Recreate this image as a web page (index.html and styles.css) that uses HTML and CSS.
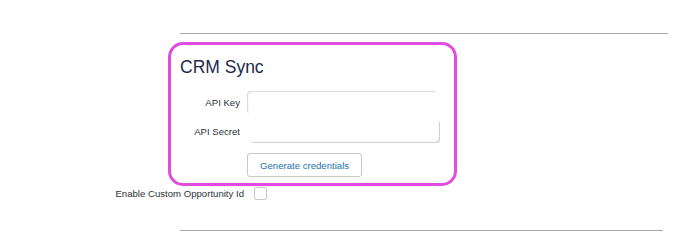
FILE: index.html
```html
<!DOCTYPE html>
<html lang="en">
<head>
    <meta charset="UTF-8">
    <meta name="viewport" content="width=device-width, initial-scale=1.0">
    <title>CRM Sync</title>
    <link rel="stylesheet" href="styles.css">
</head>
<body>
<div class="rule rule-top"></div>

<div class="card">
    <h2>CRM Sync</h2>
    <div class="fields">
        <label for="apiKey">API Key</label>
        <input type="text" id="apiKey" class="input input-key">
        <label for="apiSecret">API Secret</label>
        <input type="text" id="apiSecret" class="input input-secret">
        <span></span>
        <button type="button" class="btn">Generate credentials</button>
    </div>
</div>

<div class="check-row">
    <label for="customOpp">Enable Custom Opportunity Id</label>
    <input type="checkbox" id="customOpp" class="check">
</div>

<div class="rule rule-bottom"></div>
</body>
</html>
```

FILE: styles.css
```css
body {
    margin: 0;
    padding: 0;
    background-color: #fff;
    font-family: "Liberation Sans", Arial, sans-serif;
    color: #2c3338;
}
.rule {
    margin-left: 180px;
    border-top: 1px solid #a7a7a7;
}
.rule-top {
    width: 488px;
    margin-top: 33px;
}
.rule-bottom {
    width: 483px;
    margin-top: 30px;
}
.card {
    box-sizing: border-box;
    width: 289px;
    height: 144px;
    margin: 8px 0 0 168px;
    padding: 11px 9px 0 9px;
    border: 3px solid #e04ce0;
    border-radius: 15px;
}
.card h2 {
    margin: 0;
    font-size: 17.5px;
    line-height: 23px;
    font-weight: 400;
    color: #1c2b4a;
}
.fields {
    display: grid;
    grid-template-columns: 60px 193px;
    column-gap: 7px;
    row-gap: 6px;
    align-items: center;
    margin-top: 12px;
}
.fields label {
    text-align: right;
    font-size: 9.6px;
    color: #2c3338;
}
.input {
    box-sizing: border-box;
    width: 190px;
    height: 23px;
    margin: 0;
    border: none;
    border-radius: 4px;
    background-color: #fff;
    outline: none;
}
.input-key {
    box-shadow: inset 1px 1px 1px rgba(0, 0, 0, 0.16);
}
.input-secret {
    margin-left: 3px;
    box-shadow: inset -1px -1px 1px rgba(0, 0, 0, 0.2);
}
.btn {
    justify-self: start;
    margin-top: 4px;
    height: 24px;
    padding: 0 12px;
    border: 1px solid #c8c8c8;
    border-radius: 3px;
    background-color: #fff;
    color: #2271b1;
    font-family: "Liberation Sans", Arial, sans-serif;
    font-size: 9.6px;
}
.check-row {
    display: grid;
    grid-template-columns: 244px 13px;
    column-gap: 10px;
    align-items: center;
    margin-top: 1px;
}
.check-row label {
    text-align: right;
    font-size: 9.6px;
    color: #2c3338;
}
.check {
    box-sizing: border-box;
    appearance: none;
    width: 13px;
    height: 13px;
    margin: 0;
    border: 1px solid #c8c8c8;
    border-radius: 2px;
    background-color: #fff;
}
```
